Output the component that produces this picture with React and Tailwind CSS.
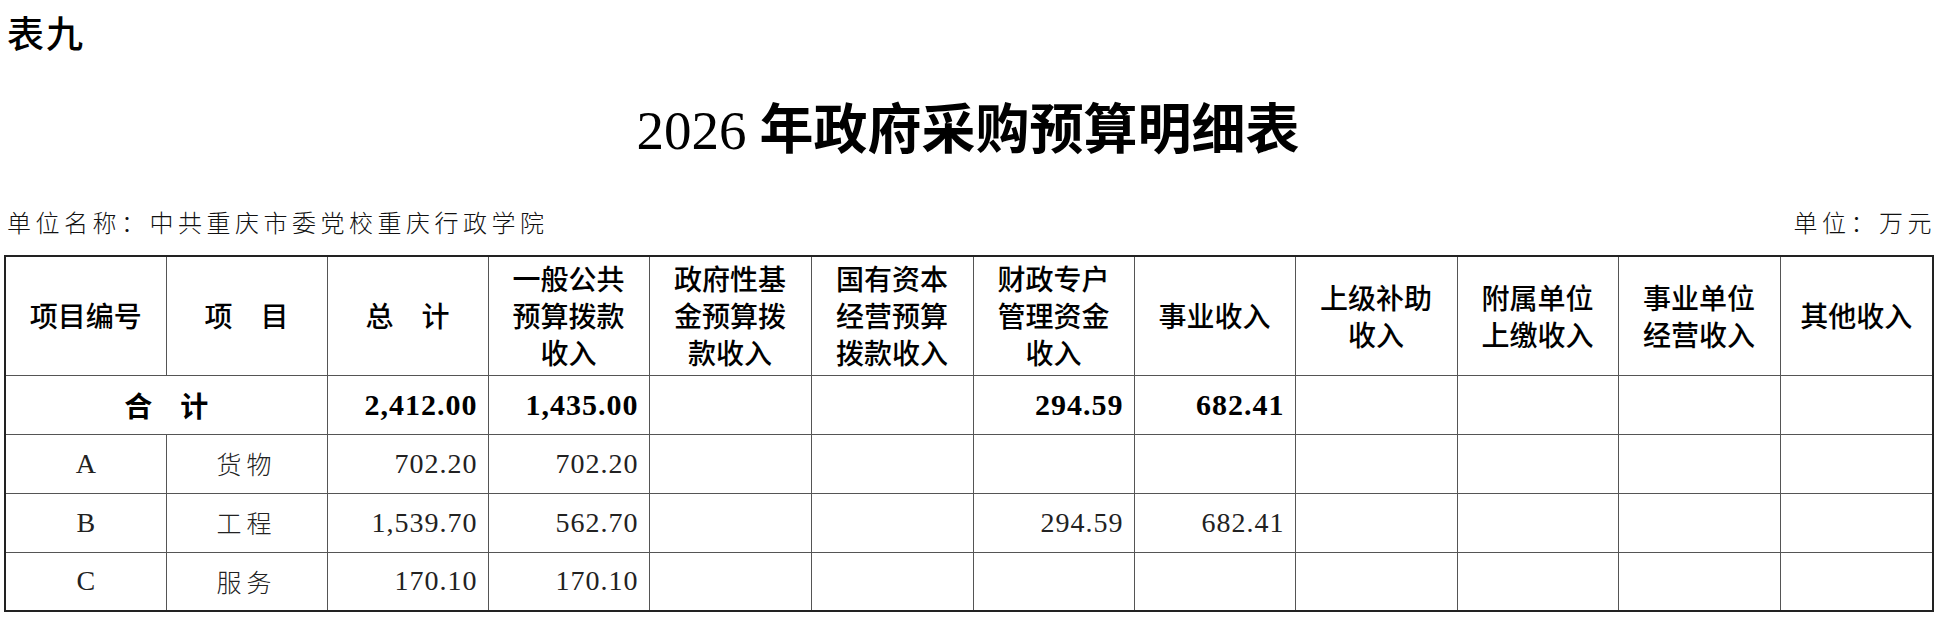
import React from "react";

const headers = [
  ["项目编号"],
  ["项　目"],
  ["总　计"],
  ["一般公共", "预算拨款", "收入"],
  ["政府性基", "金预算拨", "款收入"],
  ["国有资本", "经营预算", "拨款收入"],
  ["财政专户", "管理资金", "收入"],
  ["事业收入"],
  ["上级补助", "收入"],
  ["附属单位", "上缴收入"],
  ["事业单位", "经营收入"],
  ["其他收入"],
];

const rows = [
  { code: "A", name: "货物", values: ["702.20", "702.20", "", "", "", ""] },
  { code: "B", name: "工程", values: ["1,539.70", "562.70", "", "", "294.59", "682.41"] },
  { code: "C", name: "服务", values: ["170.10", "170.10", "", "", "", ""] },
];

const total = ["2,412.00", "1,435.00", "", "", "294.59", "682.41"];

const hei = "font-['Noto_Sans_CJK_SC',sans-serif]";
const song = "font-['Liberation_Serif','Noto_Sans_CJK_SC',serif]";

const cell = "border border-[#555]";

const App = () => {
  return (
    <div className="w-[1944px] h-[620px] bg-white text-black overflow-hidden">
      <div className="ml-[4px] w-[1928px] flex flex-col">
        <div className={`${hei} font-medium text-[37px] leading-none pt-[14px] pl-[3px] tracking-[2px]`}>
          表九
        </div>

        <h1 className="flex justify-center items-baseline mt-[48px] leading-none">
          <span className={`${song} text-[55px] font-normal mr-[13px]`}>2026</span>
          <span className={`${hei} text-[54px] font-bold`}>年政府采购预算明细表</span>
        </h1>

        <div
          className={`${hei} font-light flex justify-between items-center mt-[52px] text-[24px] leading-none tracking-[4.5px] text-[#111]`}
        >
          <span className="pl-[3px]">单位名称：中共重庆市委党校重庆行政学院</span>
          <span className="mr-[-4px]">单位：万元</span>
        </div>

        <table className="mt-[21px] w-[1928px] table-fixed border-collapse border-2 border-[#222]">
          <colgroup>
            <col className="w-[161px]" />
            <col className="w-[161px]" />
            <col className="w-[161px]" />
            <col className="w-[161px]" />
            <col className="w-[162px]" />
            <col className="w-[162px]" />
            <col className="w-[161px]" />
            <col className="w-[161px]" />
            <col className="w-[162px]" />
            <col className="w-[161px]" />
            <col className="w-[162px]" />
            <col className="w-[153px]" />
          </colgroup>
          <thead>
            <tr className="h-[119px]">
              {headers.map((lines, i) => (
                <th
                  key={i}
                  className={`${cell} ${hei} font-medium text-[28px] leading-[37px] text-center align-middle`}
                >
                  {lines.map((l, j) => (
                    <div key={j}>{l}</div>
                  ))}
                </th>
              ))}
            </tr>
          </thead>
          <tbody>
            <tr className="h-[59px]">
              <td colSpan={2} className={`${cell} ${hei} font-bold text-[28px] text-center`}>
                合　计
              </td>
              {total.map((v, i) => (
                <td
                  key={i}
                  className={`${cell} ${song} font-bold text-[30px] tracking-[1px] text-right pr-[10px]`}
                >
                  {v}
                </td>
              ))}
              {[0, 1, 2, 3].map((i) => (
                <td key={"e" + i} className={cell}></td>
              ))}
            </tr>
            {rows.map((r) => (
              <tr key={r.code} className="h-[59px]">
                <td className={`${cell} ${song} text-[28px] text-center text-[#222]`}>{r.code}</td>
                <td className={`${cell} ${hei} font-light text-[25px] tracking-[5px] text-center text-[#222]`}>
                  {r.name}
                </td>
                {r.values.map((v, i) => (
                  <td
                    key={i}
                    className={`${cell} ${song} text-[28px] tracking-[1px] text-right pr-[10px] text-[#222]`}
                  >
                    {v}
                  </td>
                ))}
                {[0, 1, 2, 3].map((i) => (
                  <td key={"e" + i} className={cell}></td>
                ))}
              </tr>
            ))}
          </tbody>
        </table>
      </div>
    </div>
  );
};

export default App;
